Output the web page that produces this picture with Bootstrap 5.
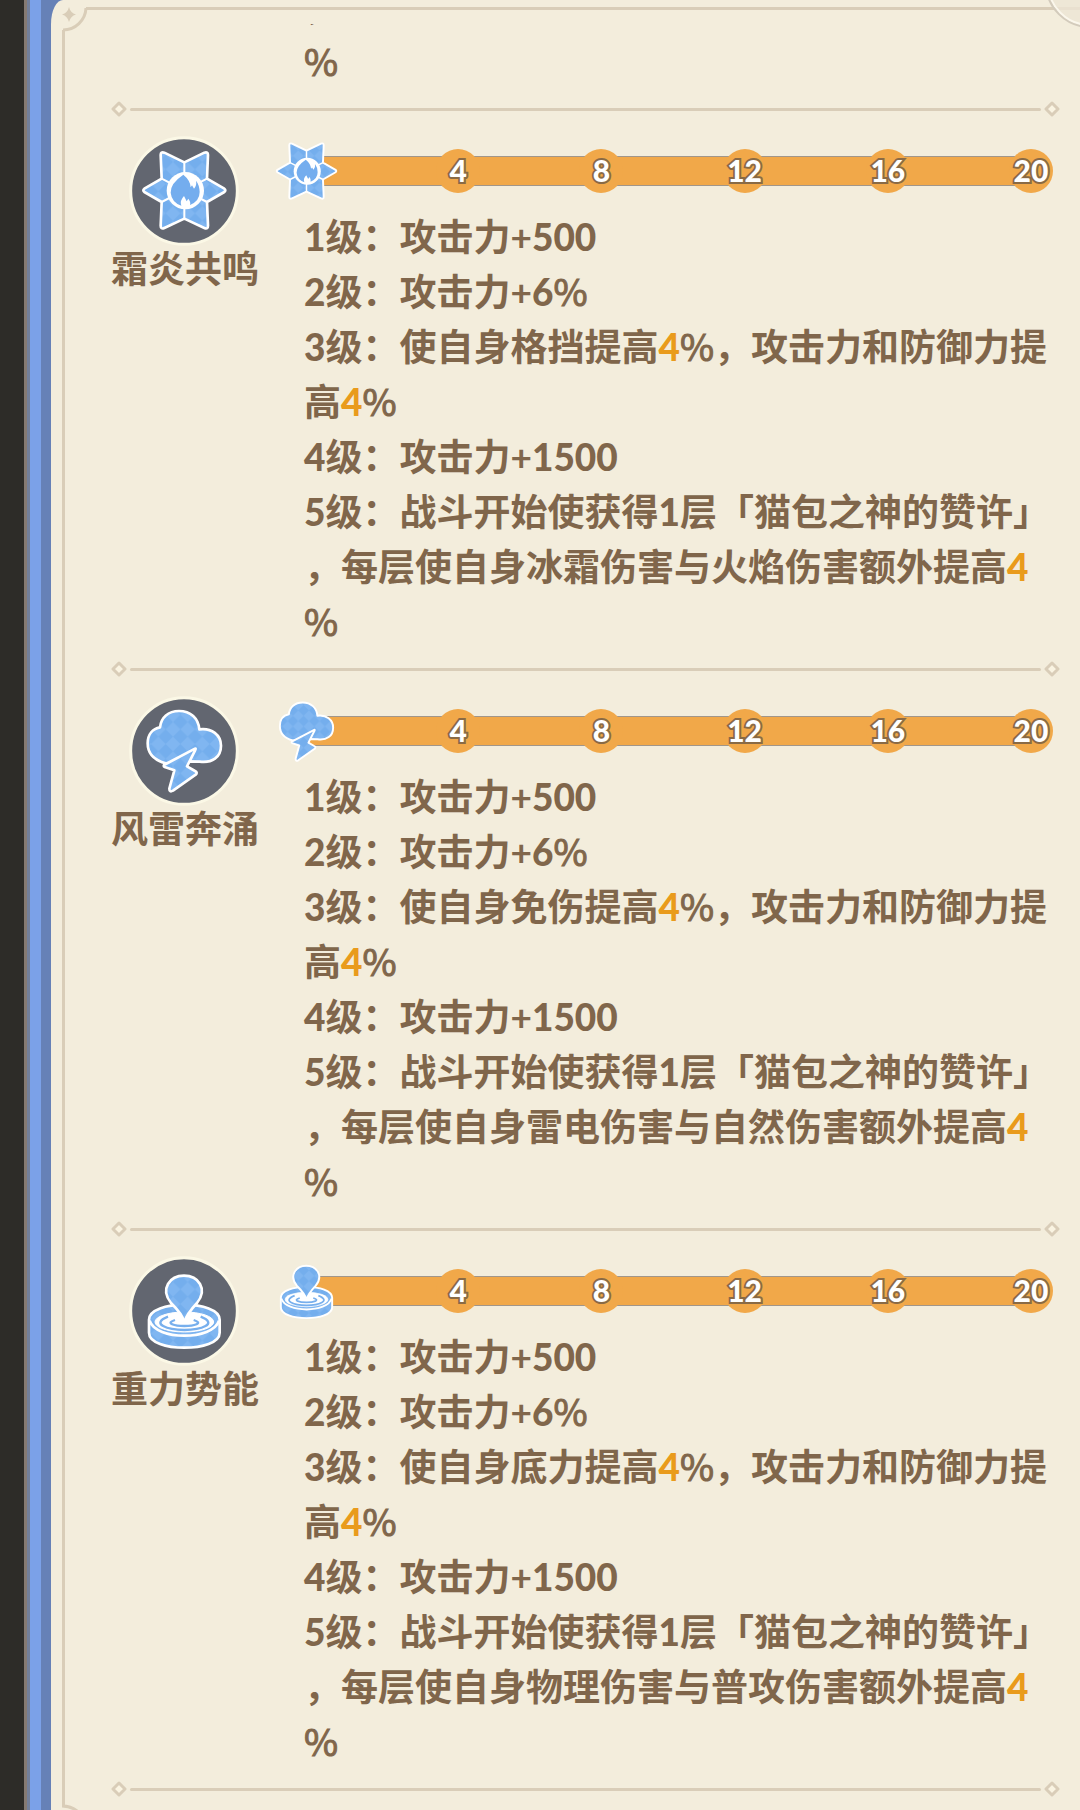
<!DOCTYPE html>
<html lang="zh-CN">
<head>
<meta charset="utf-8">
<meta name="viewport" content="width=device-width, initial-scale=1">
<title>共鸣效果</title>
<link href="https://cdn.jsdelivr.net/npm/bootstrap@5.3.0/dist/css/bootstrap.min.css" rel="stylesheet">
<style>
  :root { --paper: #f3eddc; --ink: #80664b; --line: #d9cdb8; --amber: #f1a849; }
  body {
    font-family: Lato, "Noto Sans CJK SC", sans-serif;
    font-weight: 700; font-size: 37px; line-height: 55px;
    color: var(--ink); background: #6681b7;
  }
  .rail { width: 51px; background: linear-gradient(90deg, #2d2c28 0 24px, #857a72 24px 27px, #727f9a 27px 30px, #7ba1e8 30px 41px, #6681b7 41px); }
  .panel { background: var(--paper); border-top-left-radius: 12px 24px; padding-left: 60px; padding-right: 20px; }
  .frame { inset: 0; pointer-events: none; }
  .frame .edge-top { left: 35px; right: 0; top: 7px; height: 3px; background: var(--line); }
  .frame .edge-left { left: 11px; top: 30px; bottom: 3px; width: 3px; background: var(--line); }
  .frame .corner { left: 8px; top: 4px; }
  .frame .corner-end { left: 11px; bottom: 0; }
  .frame .close-ring { right: 0; top: 0; }
  .tail-text { height: 64px; margin-top: 24px; margin-bottom: 13px; padding-left: 193px; }
  .tail-text > div { height: 55px; flex-shrink: 0; }
  .rule-line { height: 3px; background: var(--line); margin: 0 3px; border-radius: 2px; }
  .side { width: 146px; padding-top: 18px; }
  .side h2 { font-size: 37px; line-height: 37px; margin: 3px 0 0; font-weight: 700; }
  .detail { margin-left: 19px; padding: 32px 4px 12px 0; min-width: 0; }
  .track { height: 44px; padding-right: 3px; margin-bottom: 16px; }
  .track::before {
    content: ""; position: absolute; left: 30px; right: 22px; top: 7px; height: 30px;
    background: var(--amber); border-top: 1px solid #a1968a; border-bottom: 1px solid #a1968a;
  }
  .node {
    width: 44px; height: 44px; background: var(--amber); color: #fff;
    font-size: 30px; font-weight: 900; line-height: 42px;
    paint-order: stroke fill; -webkit-text-stroke: 4px #8a6a45;
  }
  .levels { padding-left: 28px; line-break: anywhere; }
  .levels b { font-weight: 900; line-height: 1; }
  .levels .boost { color: #e99b1c; }
  .pct { font-family: "Noto Sans CJK SC", sans-serif; font-weight: 400; -webkit-text-stroke: 1px var(--ink); }
  .levels .pct { line-height: 1; }
  .glyph-sm { overflow: visible; }
</style>
<script src="https://cdn.jsdelivr.net/npm/bootstrap@5.3.0/dist/js/bootstrap.bundle.min.js"></script>
</head>
<body>
<svg width="0" height="0" class="position-absolute" aria-hidden="true">
  <defs>
    <pattern id="check" width="44" height="44" patternUnits="userSpaceOnUse">
      <rect width="44" height="44" fill="#80b6f1"/>
      <path d="M22 0 44 22 22 44 0 22Z" fill="#74aeed"/>
    </pattern>
    <symbol id="frost" viewBox="85 29 336 336" overflow="visible">
      <g fill="url(#check)" stroke="#fff" stroke-width="8" stroke-linejoin="round">
        <path d="M254 111 L314 82 Q325 78 325 89 L322 160 L374 190 Q380 195 374 200 L322 230 L325 301 Q325 313 314 308 L254 280 L194 308 Q183 313 183 301 L186 230 L134 200 Q128 195 134 190 L186 160 L183 89 Q183 78 194 82Z"/>
        <path d="M254 109V282M186 160 322 230M322 160 186 230" fill="none" stroke-width="6"/>
      </g>
      <circle cx="257" cy="196" r="56" fill="#fff"/>
      <path d="M251 148 Q212 174 213 202 Q216 231 245 241 Q239 227 253 212 L261 228 L266 220 Q274 230 271 239 Q300 227 300 200 Q299 178 289 166 Q292 180 283 190 L277 180 L273 186 Q272 165 251 148Z" fill="#74adee"/>
    </symbol>
    <symbol id="storm" viewBox="85 29 336 336" overflow="visible">
      <g fill="url(#check)" stroke="#fff" stroke-width="8" stroke-linejoin="round">
        <path d="M198 234 C168 226 144 207 144 174 C144 146 160 130 181 126 C184 96 206 77 238 77 C273 77 296 99 299 132 C336 127 364 149 364 181 C364 216 337 234 300 229 L265 228Z"/>
        <path d="M286 190 L193 239 Q191 243 195 245 L224 255 L209 310 Q209 322 220 316 L289 267 Q294 261 286 257 L262 243 L286 196 Q290 188 286 190Z"/>
      </g>
    </symbol>
    <symbol id="gravity" viewBox="85 29 336 336" overflow="visible">
      <g stroke="#fff" stroke-width="8" stroke-linejoin="round">
        <path d="M148 223 C148 163 360 163 360 223 V262 C360 322 148 322 148 262Z" fill="url(#check)"/>
        <path d="M150 226 C168 286 340 286 358 226" fill="none" stroke-width="8"/>
        <ellipse cx="254" cy="230" rx="88" ry="30" fill="#fff" stroke-width="3"/>
        <path d="M205 214 C150 236 205 254 254 254 C303 254 358 236 303 214" fill="none" stroke="#77afed" stroke-width="7"/>
        <path d="M226 224 C194 234 226 242 254 242 C282 242 314 234 282 224" fill="none" stroke="#77afed" stroke-width="7"/>
        <path d="M254 231 Q248 206 214 173 C180 130 211 91 253 91 C295 91 326 130 292 173 Q261 206 254 231Z" fill="url(#check)"/>
      </g>
    </symbol>
    <symbol id="gem" viewBox="0 0 16 16">
      <path d="M8 2 14 8 8 14 2 8Z" fill="#faf4e2" stroke="#d9cdb8" stroke-width="3" stroke-linejoin="round"/>
    </symbol>
  </defs>
</svg>

<div class="d-flex min-vh-100">
  <div class="rail flex-shrink-0"></div>
  <main class="panel position-relative flex-grow-1">
    <div class="frame position-absolute" aria-hidden="true">
      <div class="edge-top position-absolute"></div>
      <div class="edge-left position-absolute"></div>
      <svg class="corner position-absolute" width="30" height="30" viewBox="0 0 30 30">
        <path d="M27 4 A23 23 0 0 1 4 26" fill="none" stroke="#d9cdb8" stroke-width="3"/>
        <path d="M10 3 Q11.500 9 17 10.500 Q11.500 12 10 18 Q8.500 12 3 10.500 Q8.500 9 10 3Z" fill="#d9cdb8"/>
      </svg>
      <svg class="corner-end position-absolute" width="20" height="6" viewBox="0 0 20 6">
        <path d="M0 2 Q9 2 15 7" fill="none" stroke="#d9cdb8" stroke-width="3"/>
      </svg>
      <svg class="close-ring position-absolute" width="32" height="28" viewBox="0 0 32 28">
        <circle cx="42" cy="-17" r="42" fill="#ece5d5" fill-opacity=".8" stroke="#fbf7ec" stroke-width="2"/>
        <circle cx="42" cy="-17" r="44" fill="none" stroke="#d3cbbc" stroke-width="2"/>
      </svg>
    </div>

    <div class="tail-text d-flex flex-column justify-content-end overflow-hidden">
      <div>，</div>
      <div class="pct">%</div>
    </div>
    <div class="d-flex align-items-center"><svg width="16" height="16"><use href="#gem"/></svg><div class="rule-line flex-grow-1"></div><svg width="16" height="16"><use href="#gem"/></svg></div>

    <section class="d-flex">
      <div class="side flex-shrink-0 text-center">
        <svg class="d-block mx-auto" width="112" height="112" viewBox="85 29 336 336"><circle cx="253" cy="197" r="160" fill="#626670" stroke="#fbf8e6" stroke-width="9"/><use href="#frost" x="85" y="29" width="336" height="336"/></svg>
        <h2 class="text-nowrap">霜炎共鸣</h2>
      </div>
      <div class="detail flex-grow-1">
        <div class="track d-flex align-items-center position-relative">
          <svg class="glyph-sm position-relative flex-shrink-0" width="61" height="61" viewBox="128 71 252 252"><use href="#frost" x="85" y="29" width="336" height="336"/></svg>
          <div class="d-flex flex-grow-1 position-relative text-center">
            <div class="col d-flex justify-content-end"><span class="node rounded-circle d-flex justify-content-center">4</span></div>
            <div class="col d-flex justify-content-end"><span class="node rounded-circle d-flex justify-content-center">8</span></div>
            <div class="col d-flex justify-content-end"><span class="node rounded-circle d-flex justify-content-center">12</span></div>
            <div class="col d-flex justify-content-end"><span class="node rounded-circle d-flex justify-content-center">16</span></div>
            <div class="col d-flex justify-content-end"><span class="node rounded-circle d-flex justify-content-center">20</span></div>
          </div>
        </div>
        <div class="levels">
          <div><b>1</b>级：攻击力+<b>500</b></div>
          <div><b>2</b>级：攻击力+<b>6</b><span class="pct">%</span></div>
          <div><b>3</b>级：使自身格挡提高<b class="boost">4</b><span class="pct">%</span>，攻击力和防御力提高<b class="boost">4</b><span class="pct">%</span></div>
          <div><b>4</b>级：攻击力+<b>1500</b></div>
          <div><b>5</b>级：战斗开始使获得<b>1</b>层「猫包之神的赞许」，每层使自身冰霜伤害与火焰伤害额外提高<b class="boost">4</b><span class="pct">%</span></div>
        </div>
      </div>
    </section>
    <div class="d-flex align-items-center"><svg width="16" height="16"><use href="#gem"/></svg><div class="rule-line flex-grow-1"></div><svg width="16" height="16"><use href="#gem"/></svg></div>

    <section class="d-flex">
      <div class="side flex-shrink-0 text-center">
        <svg class="d-block mx-auto" width="112" height="112" viewBox="85 29 336 336"><circle cx="253" cy="197" r="160" fill="#626670" stroke="#fbf8e6" stroke-width="9"/><use href="#storm" x="85" y="29" width="336" height="336"/></svg>
        <h2 class="text-nowrap">风雷奔涌</h2>
      </div>
      <div class="detail flex-grow-1">
        <div class="track d-flex align-items-center position-relative">
          <svg class="glyph-sm position-relative flex-shrink-0" width="61" height="61" viewBox="128 71 252 252"><use href="#storm" x="85" y="29" width="336" height="336"/></svg>
          <div class="d-flex flex-grow-1 position-relative text-center">
            <div class="col d-flex justify-content-end"><span class="node rounded-circle d-flex justify-content-center">4</span></div>
            <div class="col d-flex justify-content-end"><span class="node rounded-circle d-flex justify-content-center">8</span></div>
            <div class="col d-flex justify-content-end"><span class="node rounded-circle d-flex justify-content-center">12</span></div>
            <div class="col d-flex justify-content-end"><span class="node rounded-circle d-flex justify-content-center">16</span></div>
            <div class="col d-flex justify-content-end"><span class="node rounded-circle d-flex justify-content-center">20</span></div>
          </div>
        </div>
        <div class="levels">
          <div><b>1</b>级：攻击力+<b>500</b></div>
          <div><b>2</b>级：攻击力+<b>6</b><span class="pct">%</span></div>
          <div><b>3</b>级：使自身免伤提高<b class="boost">4</b><span class="pct">%</span>，攻击力和防御力提高<b class="boost">4</b><span class="pct">%</span></div>
          <div><b>4</b>级：攻击力+<b>1500</b></div>
          <div><b>5</b>级：战斗开始使获得<b>1</b>层「猫包之神的赞许」，每层使自身雷电伤害与自然伤害额外提高<b class="boost">4</b><span class="pct">%</span></div>
        </div>
      </div>
    </section>
    <div class="d-flex align-items-center"><svg width="16" height="16"><use href="#gem"/></svg><div class="rule-line flex-grow-1"></div><svg width="16" height="16"><use href="#gem"/></svg></div>

    <section class="d-flex">
      <div class="side flex-shrink-0 text-center">
        <svg class="d-block mx-auto" width="112" height="112" viewBox="85 29 336 336"><circle cx="253" cy="197" r="160" fill="#626670" stroke="#fbf8e6" stroke-width="9"/><use href="#gravity" x="85" y="29" width="336" height="336"/></svg>
        <h2 class="text-nowrap">重力势能</h2>
      </div>
      <div class="detail flex-grow-1">
        <div class="track d-flex align-items-center position-relative">
          <svg class="glyph-sm position-relative flex-shrink-0" width="61" height="61" viewBox="128 71 252 252"><use href="#gravity" x="85" y="29" width="336" height="336"/></svg>
          <div class="d-flex flex-grow-1 position-relative text-center">
            <div class="col d-flex justify-content-end"><span class="node rounded-circle d-flex justify-content-center">4</span></div>
            <div class="col d-flex justify-content-end"><span class="node rounded-circle d-flex justify-content-center">8</span></div>
            <div class="col d-flex justify-content-end"><span class="node rounded-circle d-flex justify-content-center">12</span></div>
            <div class="col d-flex justify-content-end"><span class="node rounded-circle d-flex justify-content-center">16</span></div>
            <div class="col d-flex justify-content-end"><span class="node rounded-circle d-flex justify-content-center">20</span></div>
          </div>
        </div>
        <div class="levels">
          <div><b>1</b>级：攻击力+<b>500</b></div>
          <div><b>2</b>级：攻击力+<b>6</b><span class="pct">%</span></div>
          <div><b>3</b>级：使自身底力提高<b class="boost">4</b><span class="pct">%</span>，攻击力和防御力提高<b class="boost">4</b><span class="pct">%</span></div>
          <div><b>4</b>级：攻击力+<b>1500</b></div>
          <div><b>5</b>级：战斗开始使获得<b>1</b>层「猫包之神的赞许」，每层使自身物理伤害与普攻伤害额外提高<b class="boost">4</b><span class="pct">%</span></div>
        </div>
      </div>
    </section>
    <div class="d-flex align-items-center"><svg width="16" height="16"><use href="#gem"/></svg><div class="rule-line flex-grow-1"></div><svg width="16" height="16"><use href="#gem"/></svg></div>
  </main>
</div>
</body>
</html>
